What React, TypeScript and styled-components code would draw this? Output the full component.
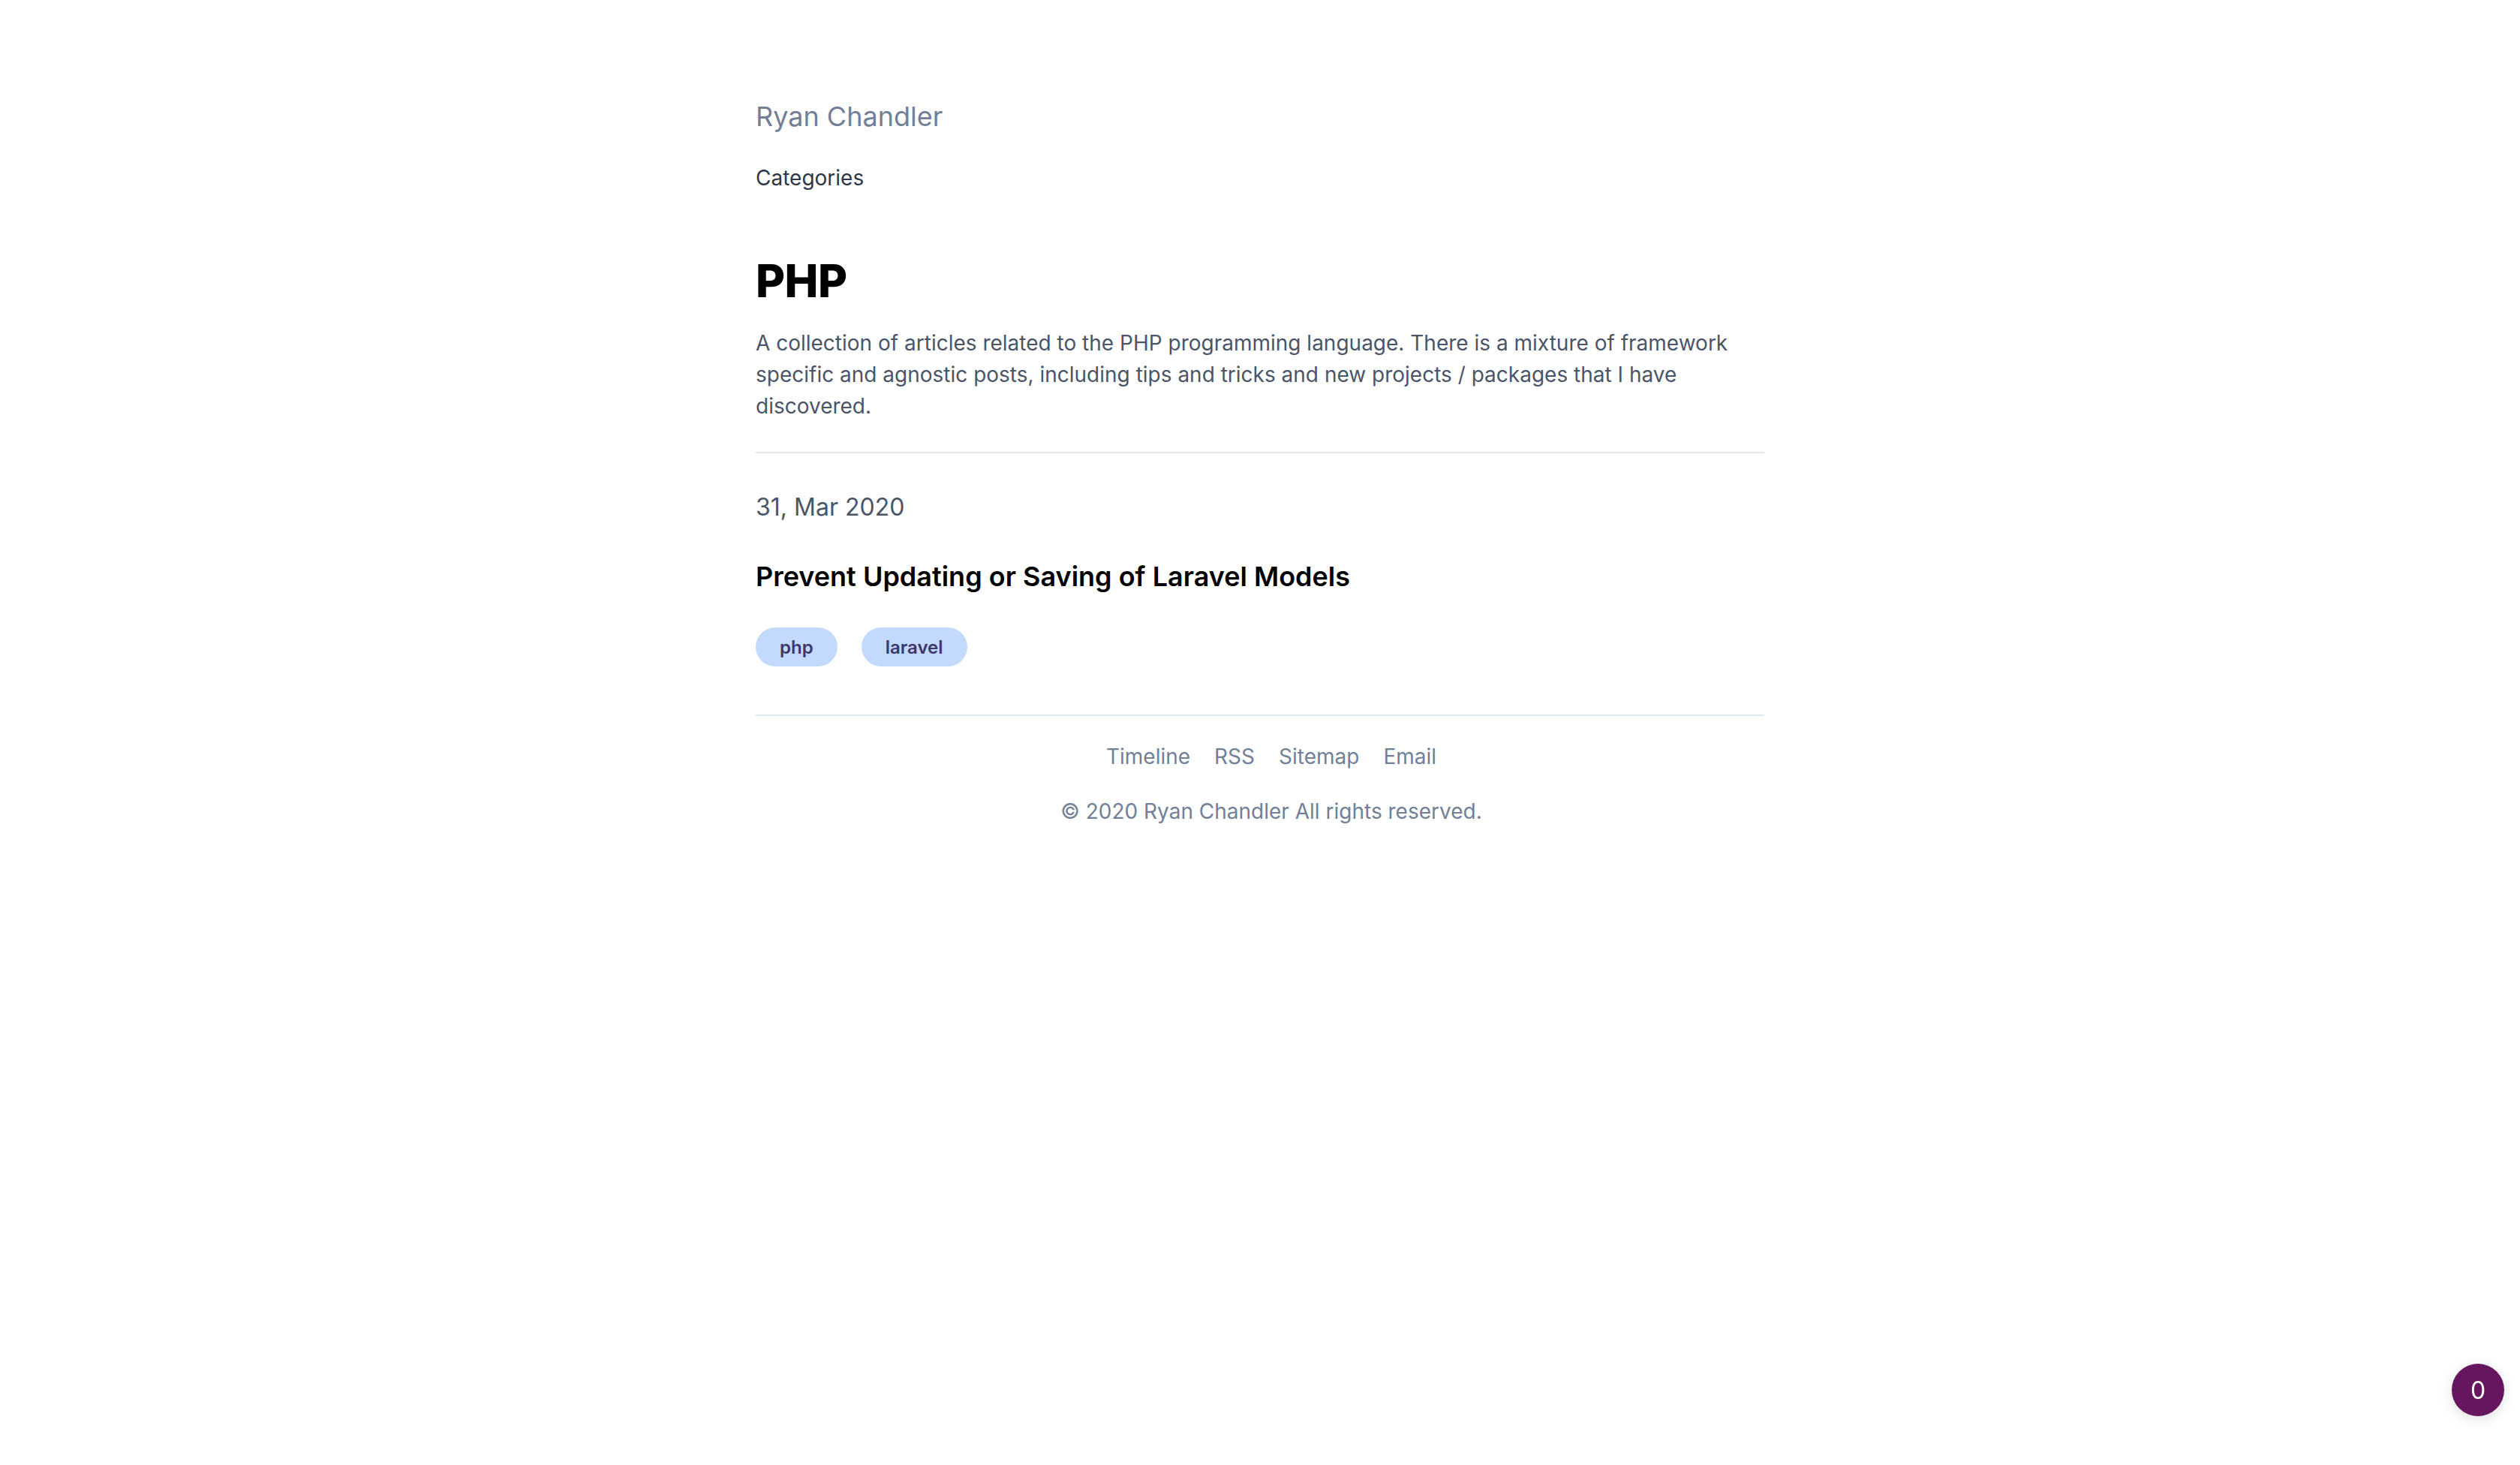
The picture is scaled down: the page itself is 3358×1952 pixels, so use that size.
import React from "react";
import styled, { createGlobalStyle } from "styled-components";

const GlobalStyle = createGlobalStyle`
  html, body {
    margin: 0;
    padding: 0;
    background: #ffffff;
  }
  body {
    font-family: Inter, "Noto Sans", "Liberation Sans", sans-serif;
    -webkit-font-smoothing: antialiased;
  }
  * { box-sizing: border-box; }
`;

const Page = styled.div`
  max-width: 1344px;
  margin: 0 auto;
  padding: 128px 0 64px;
`;

const Header = styled.header`
  display: flex;
  flex-direction: column;
  align-items: flex-start;
  gap: 34px;
`;

const SiteName = styled.a`
  font-size: 36px;
  line-height: 54px;
  color: #718096;
  text-decoration: none;
`;

const NavLink = styled.a`
  font-size: 28px;
  line-height: 42px;
  color: #2d3748;
  text-decoration: none;
`;

const Intro = styled.section`
  margin-top: 80px;
  padding-bottom: 40px;
  border-bottom: 2px solid #e2e8f0;
`;

const Title = styled.h1`
  margin: 0;
  font-size: 60px;
  line-height: 72px;
  font-weight: 800;
  color: #000000;
  letter-spacing: -0.5px;
`;

const Description = styled.p`
  margin: 26px 0 0;
  font-size: 28px;
  line-height: 42px;
  color: #4a5568;
`;

const PostList = styled.section`
  padding: 48px 0 64px;
  border-bottom: 2px solid #e2e8f0;
`;

const Post = styled.article`
  display: flex;
  flex-direction: column;
  align-items: flex-start;
`;

const PostDate = styled.time`
  font-size: 32px;
  line-height: 48px;
  color: #4a5568;
`;

const PostTitle = styled.a`
  margin-top: 40px;
  font-size: 36px;
  line-height: 56px;
  font-weight: 600;
  color: #000000;
  text-decoration: none;
`;

const Tags = styled.div`
  margin-top: 40px;
  display: flex;
  gap: 32px;
`;

const Tag = styled.a`
  display: inline-flex;
  align-items: center;
  height: 52px;
  padding: 0 32px;
  border-radius: 26px;
  background: #c3dafe;
  color: #3c366b;
  font-size: 24px;
  font-weight: 600;
  text-decoration: none;
`;

const Footer = styled.footer`
  display: flex;
  flex-direction: column;
  align-items: center;
  padding: 30px 0 0 30px;
  gap: 25px;
`;

const FooterLinks = styled.nav`
  display: flex;
  gap: 32px;
`;

const FooterLink = styled.a`
  font-size: 28px;
  line-height: 48px;
  color: #718096;
  text-decoration: none;
`;

const Copyright = styled.p`
  margin: 0;
  font-size: 28px;
  line-height: 48px;
  color: #718096;
`;

const Badge = styled.div`
  position: fixed;
  right: 21px;
  bottom: 65px;
  width: 70px;
  height: 70px;
  border-radius: 50%;
  background: #66165f;
  color: #ffffff;
  display: flex;
  align-items: center;
  justify-content: center;
  font-size: 32px;
  box-shadow: 0 4px 18px rgba(0, 0, 0, 0.12);
`;

export default function App() {
  return (
    <>
      <GlobalStyle />
      <Page>
        <Header>
          <SiteName href="#">Ryan Chandler</SiteName>
          <NavLink href="#">Categories</NavLink>
        </Header>
        <Intro>
          <Title>PHP</Title>
          <Description>
            A collection of articles related to the PHP programming language. There is a mixture of
            framework specific and agnostic posts, including tips and tricks and new projects /
            packages that I have discovered.
          </Description>
        </Intro>
        <PostList>
          <Post>
            <PostDate>31, Mar 2020</PostDate>
            <PostTitle href="#">Prevent Updating or Saving of Laravel Models</PostTitle>
            <Tags>
              <Tag href="#">php</Tag>
              <Tag href="#">laravel</Tag>
            </Tags>
          </Post>
        </PostList>
        <Footer>
          <FooterLinks>
            <FooterLink href="#">Timeline</FooterLink>
            <FooterLink href="#">RSS</FooterLink>
            <FooterLink href="#">Sitemap</FooterLink>
            <FooterLink href="#">Email</FooterLink>
          </FooterLinks>
          <Copyright>© 2020 Ryan Chandler All rights reserved.</Copyright>
        </Footer>
      </Page>
      <Badge>0</Badge>
    </>
  );
}
